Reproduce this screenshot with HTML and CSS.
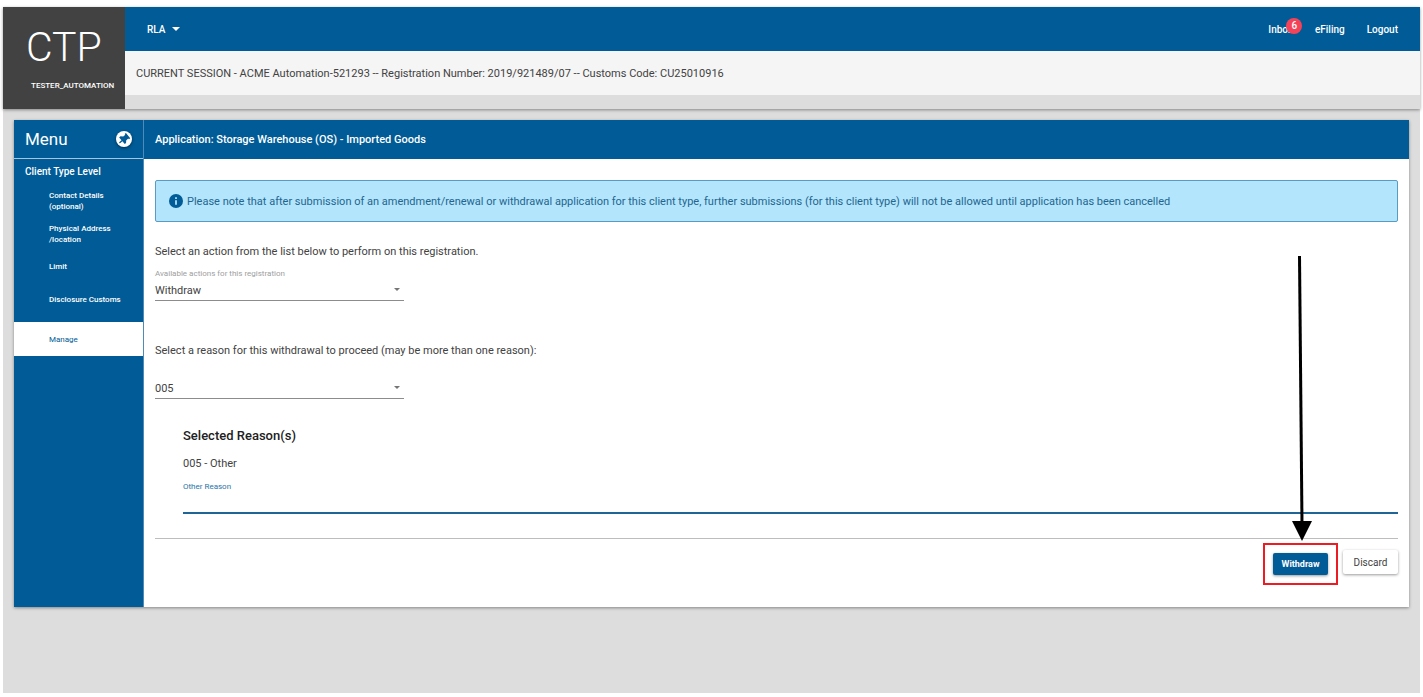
FILE: index.html
```html
<!DOCTYPE html>
<html lang="en">
<head>
    <meta charset="UTF-8">
    <meta name="viewport" content="width=device-width, initial-scale=1.0">
    <title>CTP - Manage Registration</title>
    <link rel="stylesheet" href="styles.css">
</head>
<body>
    <div class="page">
        <header class="header">
            <div class="brand">
                <span class="brand-name">CTP</span>
                <span class="brand-user">TESTER_AUTOMATION</span>
            </div>
            <div class="header-main">
                <nav class="navbar">
                    <button type="button" class="nav-menu">RLA <span class="caret"></span></button>
                    <div class="nav-links">
                        <a href="#" class="inbox">Inbox<span class="badge">6</span></a>
                        <a href="#">eFiling</a>
                        <a href="#">Logout</a>
                    </div>
                </nav>
                <p class="session">CURRENT SESSION - ACME Automation-521293 -- Registration Number: 2019/921489/07 -- Customs Code: CU25010916</p>
            </div>
        </header>

        <div class="card">
            <aside class="sidebar">
                <div class="sidebar-header">
                    <span>Menu</span>
                    <button type="button" class="pin" aria-label="Pin menu">
                        <svg viewBox="0 0 24 24" width="16" height="16">
                            <circle cx="12" cy="12" r="12" fill="#fff"/>
                            <g transform="rotate(50 12 12)" fill="#005b96">
                                <path d="M7 4h10v2.500h-1.500v4l3 3v2.500h-5.500v4l-1 2-1-2v-4H5.500v-2.500l3-3v-4H7z"/>
                            </g>
                        </svg>
                    </button>
                </div>
                <h2 class="menu-title">Client Type Level</h2>
                <ul class="menu">
                    <li><a href="#">Contact Details (optional)</a></li>
                    <li><a href="#">Physical Address /location</a></li>
                    <li><a href="#">Limit</a></li>
                    <li><a href="#">Disclosure Customs</a></li>
                    <li class="active"><a href="#">Manage</a></li>
                </ul>
            </aside>

            <main class="content">
                <h1 class="content-header">Application: Storage Warehouse (OS) - Imported Goods</h1>
                <form class="content-body">
                    <div class="notice">
                        <svg viewBox="0 0 24 24" width="14" height="14">
                            <circle cx="12" cy="12" r="12" fill="#005b96"/>
                            <path d="M10.500 5.500h3v3h-3zM10.500 10.500h3v8h-3z" fill="#b3e5fc"/>
                        </svg>
                        <span>Please note that after submission of an amendment/renewal or withdrawal application for this client type, further submissions (for this client type) will not be allowed until application has been cancelled</span>
                    </div>

                    <p class="prompt">Select an action from the list below to perform on this registration.</p>
                    <div class="field">
                        <label for="action">Available actions for this registration</label>
                        <select id="action">
                            <option>Withdraw</option>
                        </select>
                        <span class="arrow"></span>
                    </div>

                    <p class="prompt reason-prompt" id="reason-label">Select a reason for this withdrawal to proceed (may be more than one reason):</p>
                    <div class="field reason-field">
                        <select id="reason" aria-labelledby="reason-label">
                            <option>005</option>
                        </select>
                        <span class="arrow"></span>
                    </div>

                    <section class="reasons">
                        <h3>Selected Reason(s)</h3>
                        <p>005 - Other</p>
                        <label for="other">Other Reason</label>
                        <input type="text" id="other">
                    </section>

                    <div class="actions">
                        <div class="highlight">
                            <svg class="pointer" viewBox="0 0 22 285" width="22" height="285">
                                <path d="M7.500 0L10 268" stroke="#000" stroke-width="3"/>
                                <path d="M0 265h20L10 285z"/>
                            </svg>
                            <button type="button" class="btn primary">Withdraw</button>
                        </div>
                        <button type="button" class="btn">Discard</button>
                    </div>
                </form>
            </main>
        </div>
    </div>
</body>
</html>
```

FILE: styles.css
```css
* {
    box-sizing: border-box;
}
body {
    margin: 0;
    padding: 7px 3px 4px;
    min-height: 100vh;
    display: flex;
    background-color: #fff;
    color: #424242;
    font-family: Roboto, Arial, sans-serif;
    font-size: 11px;
}
h1, h2, h3, p, ul {
    margin: 0;
    padding: 0;
}
a {
    color: inherit;
    text-decoration: none;
}
button, select, input {
    font-family: inherit;
    font-size: inherit;
    color: inherit;
    border: 0;
    padding: 0;
    background: none;
}
.page {
    flex: 1;
    background-color: #ddd;
}

/* header */
.header {
    display: flex;
    box-shadow: 0 1px 3px rgba(0, 0, 0, 0.4);
}
.brand {
    width: 122px;
    height: 102px;
    padding: 18px 8px 0 23px;
    display: flex;
    flex-direction: column;
    background-color: #424242;
    color: #fff;
}
.brand-name {
    font-size: 41px;
    line-height: 44px;
    font-weight: 300;
}
.brand-user {
    margin-top: 10px;
    padding-left: 5px;
    font-size: 8px;
    line-height: 14px;
    font-weight: 500;
}
.header-main {
    flex: 1;
}
.navbar {
    height: 44px;
    padding: 0 22px;
    display: flex;
    justify-content: space-between;
    align-items: center;
    background-color: #005b96;
    color: #fff;
    font-size: 10px;
    font-weight: 500;
}
.nav-menu {
    display: flex;
    align-items: center;
    gap: 7px;
    font-weight: 500;
}
.caret {
    border: 4px solid transparent;
    border-top-color: #fff;
    border-bottom: 0;
}
.nav-links {
    display: flex;
    gap: 22px;
}
.inbox {
    position: relative;
}
.badge {
    position: absolute;
    top: -6px;
    left: 18px;
    width: 16px;
    height: 16px;
    border-radius: 50%;
    background-color: #f44359;
    font-size: 10px;
    line-height: 16px;
    text-align: center;
}
.session {
    height: 44px;
    padding-left: 11px;
    background-color: #f5f5f5;
    line-height: 46px;
}

/* card */
.card {
    margin: 11px;
    display: flex;
    background-color: #fff;
    box-shadow: 0 1px 3px rgba(0, 0, 0, 0.4);
}
.sidebar {
    width: 130px;
    background-color: #005b96;
    color: #fff;
    border-right: 1px solid #4d8cb6;
}
.sidebar-header {
    height: 39px;
    padding: 0 11px;
    display: flex;
    justify-content: space-between;
    align-items: center;
    border-bottom: 1px solid #a6c6dc;
    font-size: 17px;
}
.pin {
    display: flex;
    border-radius: 50%;
    box-shadow: 0 1px 3px rgba(0, 0, 0, 0.5);
}
.menu-title {
    padding-left: 11px;
    font-size: 10px;
    line-height: 25px;
    font-weight: 500;
}
.menu {
    list-style: none;
    font-size: 8px;
    line-height: 11px;
    font-weight: 500;
}
.menu li {
    height: 33px;
    padding: 0 8px 0 35px;
    display: flex;
    align-items: center;
}
.menu .active {
    height: 34px;
    margin-top: 6px;
    background-color: #fff;
    color: #005b96;
    font-weight: 400;
}
.content {
    flex: 1;
}
.content-header {
    height: 39px;
    padding-left: 11px;
    background-color: #005b96;
    color: #fff;
    font-size: 11px;
    line-height: 39px;
    font-weight: 500;
}
.content-body {
    padding: 21px 11px 22px;
}
.notice {
    min-height: 42px;
    padding: 0 13px;
    display: flex;
    align-items: center;
    gap: 4px;
    background-color: #b3e5fc;
    border: 1px solid #5a9bc4;
    border-radius: 2px;
    color: #24658f;
}
.notice svg {
    flex-shrink: 0;
}
.prompt {
    margin-top: 22px;
    line-height: 16px;
}
.field {
    position: relative;
    width: 249px;
    margin-top: 8px;
}
.field label {
    display: block;
    color: #9e9e9e;
    font-size: 8px;
    line-height: 12px;
}
.field select {
    display: block;
    width: 100%;
    height: 21px;
    appearance: none;
    border-bottom: 1px solid #8c8c8c;
}
.arrow {
    position: absolute;
    right: 4px;
    bottom: 10px;
    border: 3px solid transparent;
    border-top-color: #757575;
    border-bottom: 0;
    pointer-events: none;
}
.reason-prompt {
    margin-top: 42px;
}
.reason-field {
    margin-top: 19px;
}
.reasons {
    margin-top: 28px;
    padding-left: 28px;
}
.reasons h3 {
    color: #212121;
    font-size: 13px;
    line-height: 18px;
    font-weight: 500;
}
.reasons p {
    margin-top: 11px;
    line-height: 16px;
}
.reasons label {
    display: block;
    margin-top: 9px;
    color: #2a75a8;
    font-size: 8px;
    line-height: 12px;
}
.reasons input {
    display: block;
    width: 100%;
    height: 21px;
    border-bottom: 2px solid #1f6596;
    outline: 0;
}
.actions {
    margin-top: 24px;
    padding-top: 4px;
    display: flex;
    justify-content: flex-end;
    align-items: flex-start;
    gap: 5px;
    border-top: 1px solid #bdbdbd;
}
.highlight {
    position: relative;
    padding: 8px;
    border: 2px solid #ed1c24;
}
.pointer {
    position: absolute;
    left: 27px;
    bottom: calc(100% + 4px);
}
.btn {
    display: block;
    margin-top: 7px;
    width: 55px;
    height: 24px;
    border-radius: 2px;
    background-color: #fff;
    box-shadow: 0 1px 3px rgba(0, 0, 0, 0.4);
    font-size: 10px;
}
.primary {
    margin-top: 0;
    height: 22px;
    background-color: #005b96;
    color: #fff;
    font-size: 9px;
    font-weight: 700;
}
```
